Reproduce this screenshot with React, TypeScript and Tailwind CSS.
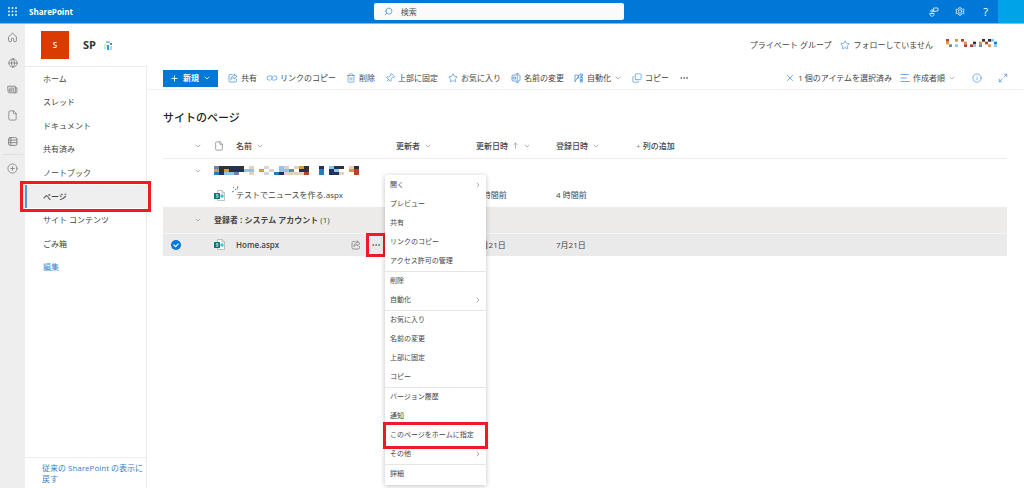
import React from 'react';
import {
  ChevronDown,
  ChevronRight,
  CirclePlus,
  Copy,
  File,
  Globe,
  Info,
  Link,
  Maximize2,
  MoreHorizontal,
  Pin,
  Plus,
  Search,
  Star,
  Trash2,
  X,
} from 'lucide-react';

const tileColors: Record<string, string> = {
  s: '#6f84a8',
  n: '#22305c',
  k: '#33302f',
  o: '#d99a3d',
  a: '#8cc6ea',
  b: '#1f7fc4',
  t: '#e2d2c6',
  g: '#cfdad6',
  r: '#b5432c',
};

const groupTiles = [
  'skknnk.t..g..at.tok..n.ank.tk',
  'okoknnaa.o.t.aas.nn..b.na..or',
  'bnaas..t..g.bnttttr..b.nnt..r',
];

const userTiles = [
  'r..o.r......k.ka.',
  'o.....o..k.o.r..b',
  '.s.a..r.ra.s..o.a',
];

const Mosaic: React.FC<{ rows: string[]; cell: number; className: string }> = ({ rows, cell, className }) => (
  <svg
    className={className}
    viewBox={`0 0 ${rows[0].length * cell} ${rows.length * 3}`}
    preserveAspectRatio="none"
    aria-hidden="true"
  >
    {rows.map((row, y) =>
      row.split('').map((c, x) =>
        c === '.' ? null : (
          <rect key={`${x}-${y}`} x={x * cell} y={y * 3} width={cell} height={3} fill={tileColors[c]} />
        )
      )
    )}
  </svg>
);

const Svg: React.FC<{ className: string; children: React.ReactNode }> = ({ className, children }) => (
  <svg
    className={`shrink-0 ${className}`}
    viewBox="0 0 20 20"
    fill="none"
    stroke="currentColor"
    strokeWidth="1.5"
    strokeLinecap="round"
    strokeLinejoin="round"
    aria-hidden="true"
  >
    {children}
  </svg>
);

const ShareIcon: React.FC<{ className: string }> = ({ className }) => (
  <Svg className={className}>
    <path d="M8 3H4.5A2.5 2.5 0 0 0 2 5.5v10A2.500 2.500 0 0 0 4.500 18h10a2.500 2.500 0 0 0 2.500-2.500V13" />
    <path d="M12.500 2 18 7l-5.500 5V9.500C9.500 9.500 7.500 10.500 6 13 6 8.500 8.500 5.200 12.500 5z" />
  </Svg>
);

const HomeIcon: React.FC<{ className: string }> = ({ className }) => (
  <Svg className={className}>
    <path d="M3 8.500 10 2l7 6.500V16a1.500 1.500 0 0 1-1.500 1.500h-2A1.500 1.500 0 0 1 12 16v-3a2 2 0 0 0-4 0v3a1.500 1.500 0 0 1-1.500 1.500h-2A1.500 1.500 0 0 1 3 16z" />
  </Svg>
);

const NewsIcon: React.FC<{ className: string }> = ({ className }) => (
  <Svg className={className}>
    <path d="M2 4h13v12H4a2 2 0 0 1-2-2zM15 7h3v7a2 2 0 0 1-2 2h-1M5 7.500h7M5 10.500h3v2.500H5zM10.500 10.500h2M10.500 13h2" />
  </Svg>
);

const ListIcon: React.FC<{ className: string }> = ({ className }) => (
  <Svg className={className}>
    <rect x="3" y="3" width="15" height="14" rx="2" />
    <path d="M3 7.500h15M3 12h15M7 3v14" />
  </Svg>
);

const RenameIcon: React.FC<{ className: string }> = ({ className }) => (
  <Svg className={className}>
    <path d="M10 4H4a2 2 0 0 0-2 2v8a2 2 0 0 0 2 2h6M15 4h1a2 2 0 0 1 2 2v8a2 2 0 0 1-2 2h-1M10.500 1.500h4M10.500 18.500h4M12.500 1.500v17M5 8h4v4H5z" />
  </Svg>
);

const FlowIcon: React.FC<{ className: string }> = ({ className }) => (
  <Svg className={className}>
    <path d="M2 17V4h4a3.500 3.500 0 0 1 0 7L2 17M6 11l4-7" />
    <path d="M13 2h4v4h-4zM15 6v3M13 9h4v4h-4zM15 13v2M13 15h4v3h-4z" />
  </Svg>
);

const SortIcon: React.FC<{ className: string }> = ({ className }) => (
  <Svg className={className}>
    <path d="M2 3h15M2 10h11M2 17h17" />
  </Svg>
);

const GearIcon: React.FC<{ className: string }> = ({ className }) => (
  <Svg className={className}>
    <path d="M10 1.500l2 .3.700 2.100 2 .900 2-.900 1.500 2-1.100 2v2.200l1.100 2-1.500 2-2-.900-2 .900-.700 2.100-2 .300-2-.300-.700-2.100-2-.900-2 .900-1.500-2 1.100-2V7.900l-1.100-2 1.500-2 2 .900 2-.900L8 1.800z" />
    <circle cx="10" cy="9" r="3.500" />
  </Svg>
);

const ChatIcon: React.FC<{ className: string }> = ({ className }) => (
  <Svg className={className}>
    <circle cx="6" cy="8" r="2.500" />
    <path d="M2 13h8v2c0 2-2 3.500-4 3.500S2 17 2 15zM10 2h8v6h-4l-2.500 2V8H10z" />
  </Svg>
);

const PageFileIcon: React.FC = () => (
  <svg className="block h-[11px] w-[11px]" viewBox="0 0 22 22" aria-hidden="true">
    <path d="M7 1h9l5 5v15H7z" fill="#fff" stroke="#9aa3a3" strokeWidth="1.300" />
    <path d="M16 1v5h5" fill="none" stroke="#9aa3a3" strokeWidth="1.300" />
    <circle cx="16" cy="12" r="3.500" fill="#37c6d0" />
    <rect x="0" y="6" width="12" height="12" rx="1" fill="#03787c" />
    <path d="M8.500 9.500c-2-1-4.500-.500-4 1s4 1 4 2.700-2.500 1.700-4.500.800" fill="none" stroke="#fff" strokeWidth="1.500" />
  </svg>
);

const railItems = [
  { label: 'ホーム', icon: <HomeIcon className="h-[11px] w-[11px]" /> },
  { label: 'サイト', icon: <Globe className="h-[10px] w-[10px]" strokeWidth={1.800} /> },
  { label: 'ニュース', icon: <NewsIcon className="h-[11px] w-[11px]" /> },
  { label: 'ファイル', icon: <File className="h-[11px] w-[11px]" strokeWidth={1.600} /> },
  { label: 'リスト', icon: <ListIcon className="h-[11px] w-[11px]" /> },
  { label: '作成', icon: <CirclePlus className="h-[11px] w-[11px]" strokeWidth={1.600} /> },
];

const navItems = [
  'ホーム',
  'スレッド',
  'ドキュメント',
  '共有済み',
  'ノートブック',
  'ページ',
  'サイト コンテンツ',
  'ごみ箱',
  '編集',
];

const cmd = 'h-[10px] w-[10px] shrink-0 text-[#3f8fdc]';

const commands = [
  { label: '共有', icon: <ShareIcon className={cmd} /> },
  { label: 'リンクのコピー', icon: <Link className={`${cmd} rotate-45`} strokeWidth={1.600} /> },
  { label: '削除', icon: <Trash2 className={cmd} strokeWidth={1.600} /> },
  { label: '上部に固定', icon: <Pin className={`${cmd} rotate-45`} strokeWidth={1.600} /> },
  { label: 'お気に入り', icon: <Star className={cmd} strokeWidth={1.600} /> },
  { label: '名前の変更', icon: <RenameIcon className={cmd} /> },
  { label: '自動化', icon: <FlowIcon className={cmd} />, menu: true },
  { label: 'コピー', icon: <Copy className={`${cmd} -scale-y-100`} strokeWidth={1.600} /> },
];

const menuItems = [
  { label: '開く', sub: true },
  { label: 'プレビュー' },
  { label: '共有' },
  { label: 'リンクのコピー' },
  { label: 'アクセス許可の管理', line: true },
  { label: '削除' },
  { label: '自動化', sub: true, line: true },
  { label: 'お気に入り' },
  { label: '名前の変更' },
  { label: '上部に固定' },
  { label: 'コピー', line: true },
  { label: 'バージョン履歴' },
  { label: '通知' },
  { label: 'このページをホームに指定', marked: true },
  { label: 'その他', sub: true, line: true },
  { label: '詳細' },
];

const columns = [{ label: '名前' }, { label: '更新者' }, { label: '更新日時', sorted: true }, { label: '登録日時' }];

const Chevron: React.FC = () => (
  <ChevronDown className="h-2 w-2 shrink-0 text-[#888]" strokeWidth={1.800} aria-hidden="true" />
);

const TopBar: React.FC = () => (
  <header className="flex h-6 items-center border-b border-[#7dbbeb] bg-[#0078d7] text-white">
    <div className="flex flex-[14] items-center">
      <button aria-label="アプリ起動ツール" className="flex w-6 justify-center">
        <svg className="h-[9px] w-[9px]" viewBox="0 0 9 9" fill="currentColor" aria-hidden="true">
          {[0, 3.500, 7].map((y) =>
            [0, 3.500, 7].map((x) => <circle key={`${x}-${y}`} cx={x + 1} cy={y + 1} r="0.900" />)
          )}
        </svg>
      </button>
      <a href="#" className="ml-[5px] text-[8px] font-bold">
        SharePoint
      </a>
    </div>
    <label className="flex h-[17px] w-[250px] items-center gap-2 rounded-xs bg-[#fafafa] pl-[10px] text-[#3f8fdc]">
      <Search className="h-[9px] w-[9px] -scale-x-100" strokeWidth={2} />
      <input
        type="search"
        aria-label="検索"
        placeholder="検索"
        className="min-w-0 flex-1 bg-transparent text-[8px] text-[#444] outline-none placeholder:text-[#555]"
      />
    </label>
    <div className="flex h-full flex-[15] items-center justify-end">
      <button aria-label="チャット" className="flex w-[26px] justify-center">
        <ChatIcon className="h-[10px] w-[10px]" />
      </button>
      <button aria-label="設定" className="flex w-[26px] justify-center">
        <GearIcon className="h-[10px] w-[10px]" />
      </button>
      <button aria-label="ヘルプ" className="w-[25px] text-[11px]">
        ?
      </button>
      <button aria-label="アカウント" className="h-full w-[26px] bg-[#00a2e8]" />
    </div>
  </header>
);

const SideNav: React.FC = () => (
  <nav className="flex w-[122px] shrink-0 flex-col border-t border-r border-[#ececec]">
    <ul className="grid h-[212px] auto-rows-fr">
      {navItems.map((item) => {
        const active = item === 'ページ';
        return (
          <li key={item} className={active ? 'relative' : ''}>
            <a
              href="#"
              className={`flex h-full items-center ${
                active
                  ? 'border-l-2 border-[#4a9be0] bg-[#efefef] pl-4 font-medium'
                  : item === '編集'
                    ? 'pl-[18px] text-[#2b88d8]'
                    : 'pl-[18px]'
              }`}
            >
              {item}
            </a>
            {active && (
              <span className="pointer-events-none absolute -inset-x-[5px] -inset-y-1 z-10 border-[3px] border-[#ed1c24]" />
            )}
          </li>
        );
      })}
    </ul>
    <div className="mt-auto border-t border-[#ececec] pt-1 pl-[17px]">
      <a href="#" className="block h-[26px] leading-[11px] text-[#3a7fc4]">
        従来の SharePoint の表示に
        <br />
        戻す
      </a>
    </div>
  </nav>
);

const CommandBar: React.FC = () => (
  <div className="flex h-6 items-center border-t border-b border-t-transparent border-b-[#f0f0f0] pr-4 pl-4 whitespace-nowrap">
    <button className="flex h-[17px] w-[55px] shrink-0 items-center justify-center gap-1 bg-[#0078d7] font-bold text-white">
      <Plus className="h-[9px] w-[9px]" strokeWidth={2.500} />
      新規
      <ChevronDown className="h-2 w-2" strokeWidth={2.500} />
    </button>
    <div className="ml-[10px] flex items-center gap-[10px]">
      {commands.map((c) => (
        <button key={c.label} className="flex items-center gap-[3px]">
          {c.icon}
          {c.label}
          {c.menu && <Chevron />}
        </button>
      ))}
      <button aria-label="その他のコマンド">
        <MoreHorizontal className="h-[10px] w-[10px]" strokeWidth={1.600} />
      </button>
    </div>
    <div className="ml-auto flex items-center gap-2">
      <button className="flex items-center gap-[3px]">
        <X className={cmd} strokeWidth={1.800} />1 個のアイテムを選択済み
      </button>
      <button className="flex items-center gap-[3px]">
        <SortIcon className={cmd} />
        作成者順
        <Chevron />
      </button>
      <button aria-label="詳細ウィンドウ" className="mx-2">
        <Info className={cmd} strokeWidth={1.600} />
      </button>
      <button aria-label="展開">
        <Maximize2 className={cmd} strokeWidth={1.600} />
      </button>
    </div>
  </div>
);

const ContextMenu: React.FC = () => (
  <div
    role="menu"
    className="absolute -top-[58px] left-[19px] z-20 w-[101px] bg-white py-px text-[7px] font-normal shadow-[0_1px_5px_rgba(0,0,0,0.25)]"
  >
    {menuItems.map((m) => (
      <div key={m.label} className={`relative ${m.line ? 'border-b border-[#e6e6e6]' : ''}`}>
        <button role="menuitem" className="flex h-[19px] w-full items-center justify-between pr-1 pl-[5px]">
          {m.label}
          {m.sub && <ChevronRight className="h-2 w-2 text-[#777]" strokeWidth={1.800} />}
        </button>
        {m.marked && (
          <span className="pointer-events-none absolute -inset-x-[2px] -inset-y-1 z-10 border-[3px] border-[#ed1c24]" />
        )}
      </div>
    ))}
  </div>
);

const PagesTable: React.FC = () => (
  <table className="w-full table-fixed text-left whitespace-nowrap">
    <colgroup>
      <col className="w-[26px]" />
      <col className="w-[25px]" />
      <col className="w-[22px]" />
      <col className="w-[160px]" />
      <col className="w-20" />
      <col className="w-20" />
      <col className="w-20" />
      <col />
    </colgroup>
    <thead>
      <tr className="h-6 border-b border-[#ececec]">
        <th />
        <th>
          <button aria-label="すべて折りたたむ" className="ml-[5px] flex">
            <Chevron />
          </button>
        </th>
        <th>
          <File className="h-[10px] w-[10px] text-[#777]" strokeWidth={1.600} />
        </th>
        {columns.map((c) => (
          <th key={c.label} className="font-medium">
            <button className="flex items-center gap-1">
              {c.label}
              {c.sorted && (
                <Svg className="h-[7px] w-[7px] text-[#777]">
                  <path d="M10 18V3M5 8l5-5 5 5" />
                </Svg>
              )}
              <Chevron />
            </button>
          </th>
        ))}
        <th className="font-medium">
          <button>
            <span className="text-[#888]">+</span> 列の追加
          </button>
        </th>
      </tr>
    </thead>
    <tbody>
      <tr className="h-[25px]">
        <td />
        <td>
          <button aria-label="グループを折りたたむ" className="ml-[5px] flex">
            <Chevron />
          </button>
        </td>
        <td colSpan={6}>
          <Mosaic rows={groupTiles} cell={5} className="block h-[9px] w-[145px]" />
        </td>
      </tr>
      <tr className="h-6">
        <td />
        <td />
        <td>
          <PageFileIcon />
        </td>
        <td>
          <a href="#" className="relative">
            テストでニュースを作る.aspx
            <svg className="absolute -top-[3px] -left-1 h-[7px] w-[7px]" viewBox="0 0 7 7" aria-hidden="true">
              <path d="M1.500 1v1M3.500 3v1M5 3.500 6 0M0 6l2-1" stroke="#3f8fdc" fill="none" />
            </svg>
          </a>
        </td>
        <td />
        <td>4 時間前</td>
        <td>4 時間前</td>
        <td />
      </tr>
      <tr className="h-[26px] border-b border-[#f4f4f4] bg-[#edebe9]">
        <td />
        <td>
          <button aria-label="グループを折りたたむ" className="ml-[5px] flex">
            <Chevron />
          </button>
        </td>
        <td colSpan={6} className="font-bold">
          登録者 : システム アカウント <span className="font-normal">(1)</span>
        </td>
      </tr>
      <tr className="h-[23px] bg-[#eaeaea]">
        <td>
          <label className="relative ml-2 flex h-[10px] w-[10px]">
            <input
              type="checkbox"
              defaultChecked
              aria-label="Home.aspx を選択"
              className="h-[10px] w-[10px] appearance-none rounded-full bg-[#0078d7]"
            />
            <svg className="pointer-events-none absolute inset-0" viewBox="0 0 10 10" aria-hidden="true">
              <path d="M3 5l2 2 3-3" transform="translate(-.500 -.300)" fill="none" stroke="#fff" strokeWidth="1.200" />
            </svg>
          </label>
        </td>
        <td />
        <td>
          <PageFileIcon />
        </td>
        <td>
          <div className="flex items-center">
            <a href="#" className="flex-1 font-semibold">
              Home.aspx
            </a>
            <button aria-label="共有">
              <ShareIcon className="h-[10px] w-[10px] text-[#777]" />
            </button>
            <div className="relative -my-1 mr-[10px] ml-[5px]">
              <button
                aria-label="その他の操作"
                className="flex h-6 w-5 items-center justify-center border-[3px] border-[#ed1c24]"
              >
                <MoreHorizontal className="h-[10px] w-[10px]" strokeWidth={1.600} />
              </button>
              <ContextMenu />
            </div>
          </div>
        </td>
        <td />
        <td>7月21日</td>
        <td>7月21日</td>
        <td />
      </tr>
    </tbody>
  </table>
);

const App: React.FC = () => {
  return (
    <div
      lang="ja"
      className="flex min-h-screen flex-col bg-white font-['Open_Sans','Noto_Sans_CJK_JP',sans-serif] text-[8px] leading-3 text-[#444]"
    >
      <TopBar />
      <div className="flex flex-1">
        <aside className="w-[25px] shrink-0 bg-[#eee] text-[#777]">
          <ul>
            {railItems.map((r) => (
              <li key={r.label} className="mx-0.5 last:border-t last:border-[#e0e0e0]">
                <a href="#" aria-label={r.label} className="flex h-[26px] items-center justify-center">
                  {r.icon}
                </a>
              </li>
            ))}
          </ul>
        </aside>
        <div className="flex min-w-0 flex-1 flex-col">
          <div className="flex h-[42px] items-center pr-[27px] pl-4">
            <a
              href="#"
              aria-label="サイトのロゴ"
              className="flex h-7 w-7 items-center justify-center bg-[#da3b01] text-[8px] font-semibold text-white"
            >
              S
            </a>
            <h1 className="ml-[14px] text-[11px] font-bold text-[#333]">SP</h1>
            <svg className="ml-2 h-[9px] w-[9px]" viewBox="0 0 9 9" aria-hidden="true">
              <path d="M0 3h3v3H0z" fill="#d8f0c8" />
              <path d="M2 0h4v2H2z" fill="#8cc6ea" />
              <path d="M6 2h2v2H6z" fill="#6a8a98" />
              <path d="M3 4h2v5H3z" fill="#2f98d8" />
              <path d="M6 5h2v4H6z" fill="#a8d8f8" />
              <path d="M0 6h2v2H0z" fill="#b8e4f4" />
            </svg>
            <div className="ml-auto flex items-center gap-[9px]">
              <span>プライベート グループ</span>
              <button className="flex items-center gap-[3px]">
                <Star className={cmd} strokeWidth={1.600} />
                フォローしていません
              </button>
              <Mosaic rows={userTiles} cell={3} className="mb-1 ml-1 h-2 w-[51px]" />
            </div>
          </div>
          <div className="flex flex-1">
            <SideNav />
            <main className="min-w-0 flex-1">
              <CommandBar />
              <div className="pr-[17px] pl-4">
                <h2 className="pt-5 pb-2 text-[11px] leading-4 font-medium text-[#222]">サイトのページ</h2>
                <PagesTable />
              </div>
            </main>
          </div>
        </div>
      </div>
    </div>
  );
};

export default App;
